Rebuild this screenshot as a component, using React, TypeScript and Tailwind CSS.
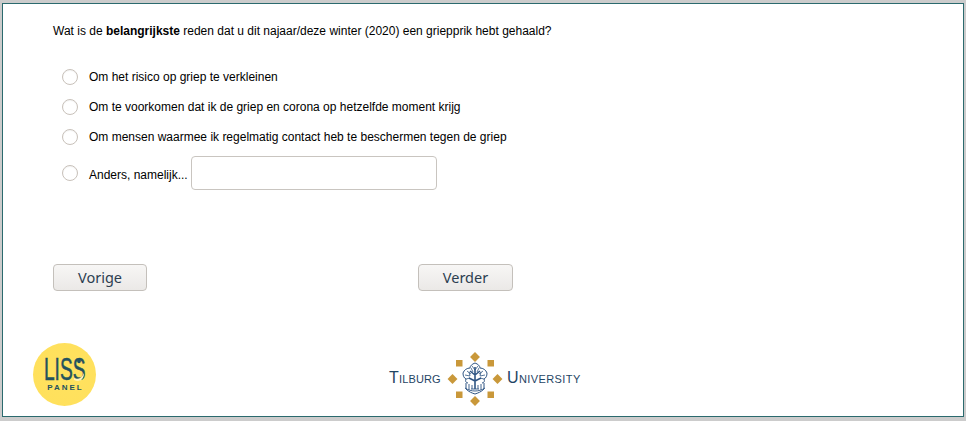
const options = [
  "Om het risico op griep te verkleinen",
  "Om te voorkomen dat ik de griep en corona op hetzelfde moment krijg",
  "Om mensen waarmee ik regelmatig contact heb te beschermen tegen de griep",
];

function Radio() {
  return (
    <span className="box-content h-[14px] w-[14px] shrink-0 rounded-full border border-[#c8c1ba] bg-white shadow-[inset_0_1px_1px_rgba(0,0,0,0.05)]" />
  );
}

function NavButton({ label, width }: { label: string; width: string }) {
  return (
    <button className={`h-[27px] ${width} rounded-[4px] border border-[#c4c0bb] bg-gradient-to-b from-[#f7f6f5] to-[#ebe9e7] font-['Noto_Sans',sans-serif] text-[14.5px] text-[#2c3e50]`}>
      {label}
    </button>
  );
}

function LissLogo() {
  return (
    <div className="relative flex h-[63px] w-[63px] flex-col items-center rounded-full bg-[radial-gradient(circle_at_60%_50%,#ffe25f_0%,#ffe05c_80%,#ffec94_100%)] pt-[14px] text-[#24525e]">
      <span className="h-[24px] scale-x-[0.6] whitespace-nowrap text-[32px] leading-[24px] [-webkit-text-stroke:0.5px_#24525e]">LISS</span>
      <span className="mt-[3px] whitespace-nowrap pl-[2px] text-[8px] font-bold leading-[8px] tracking-[2px]">PANEL</span>
      <svg className="absolute left-[40px] top-[14px]" width="14" height="26" viewBox="0 0 14 26">
        <circle cx="6" cy="4.5" r="1.8" fill="#24525e" />
        <path d="M1 21c4 2 8 0 10-5 0 6-4 10-10 7z" fill="#fff4b8" />
      </svg>
    </div>
  );
}

function Seal() {
  const gold = "#c9983a";
  return (
    <svg width="56" height="54" viewBox="0 0 56 54" className="ml-[6px] mr-1 shrink-0">
      <rect x="24.5" y="1.5" width="7" height="7" transform="rotate(45 28 5)" fill={gold} />
      <rect x="24.5" y="45.5" width="7" height="7" transform="rotate(45 28 49)" fill={gold} />
      <rect x="2" y="23.5" width="7" height="7" transform="rotate(45 5.5 27)" fill={gold} />
      <rect x="47" y="23.5" width="7" height="7" transform="rotate(45 50.5 27)" fill={gold} />
      <rect x="9" y="8" width="6.5" height="6.5" fill={gold} />
      <rect x="40.5" y="8" width="6.5" height="6.5" fill={gold} />
      <rect x="9" y="39.5" width="6.5" height="6.5" fill={gold} />
      <rect x="40.5" y="39.5" width="6.5" height="6.5" fill={gold} />
      <g fill="none" stroke="#2f5583" strokeWidth="1">
        <path d="M28 11c-3 1-5 3-5 5-3 0-6 2-7 5 0 3 1 5 3 6-1 2 0 4 2 4M28 11c3 1 5 3 5 5 3 0 6 2 7 5 0 3-1 5-3 6 1 2 0 4-2 4" />
        <path d="M25 14l3 4 3-4M24 16l2 4M32 16l-2 4M20 19l4 3M36 19l-4 3M18 23l5 1M38 23l-5 1M19 27l4-1M37 27l-4-1M22 20l1 4M34 20l-1 4" strokeWidth="0.8" />
        <path d="M28 15v22M28 23l-5-4M28 23l5-4M28 29l-6-3M28 29l6-3" strokeWidth="1.6" />
        <path d="M19 31v6c3 3 6 4 9 5 3-1 6-2 9-5v-6" />
        <path d="M22 32v6M34 32v6M25 33v4M31 33v4M18 36c6 4 14 4 20 0M24 37h8" strokeWidth="0.9" />
      </g>
    </svg>
  );
}

function TilburgLogo() {
  return (
    <div className="flex items-center font-['Liberation_Sans',sans-serif] text-[16px] leading-none text-[#1f4565] [font-variant:small-caps]">
      <span className="w-[52px] whitespace-nowrap pb-[2px] tracking-[0.15px]">Tilburg</span>
      <Seal />
      <span className="w-[74px] whitespace-nowrap pb-[2px] tracking-[0.4px]">University</span>
    </div>
  );
}

export default function App() {
  return (
    <div className="h-[421px] w-[966px] overflow-hidden bg-[#cccccc] pl-[2px] pt-[3px] font-['Liberation_Sans',sans-serif] text-[12px] text-black">
      <div className="h-[414px] w-[962px] border border-[#2b6a6e] bg-white">
        <p className="pl-[50px] pt-5 leading-[14px]">
          Wat is de <b>belangrijkste</b> reden dat u dit najaar/deze winter (2020) een griepprik hebt gehaald?
        </p>

        <div className="mt-[24px] pl-[59px]">
          {options.map((o) => (
            <div key={o} className="flex h-[30px] items-center gap-[11px]">
              <Radio />
              <span>{o}</span>
            </div>
          ))}
          <div className="mt-1 flex items-center gap-[11px]">
            <Radio />
            <div className="flex items-center gap-[3px]">
              <span className="mt-1">Anders, namelijk...</span>
              <input className="h-[34px] w-[246px] rounded-[4px] border border-[#c9c5c0] bg-white" />
            </div>
          </div>
        </div>

        <div className="mt-[74px] flex pl-[50px]">
          <NavButton label="Vorige" width="w-[94px]" />
          <div className="ml-[271px]">
            <NavButton label="Verder" width="w-[95px]" />
          </div>
        </div>

        <div className="mt-[51px] flex items-center pl-[30px]">
          <LissLogo />
          <div className="ml-[293px] mt-[10px]">
            <TilburgLogo />
          </div>
        </div>
      </div>
    </div>
  );
}
